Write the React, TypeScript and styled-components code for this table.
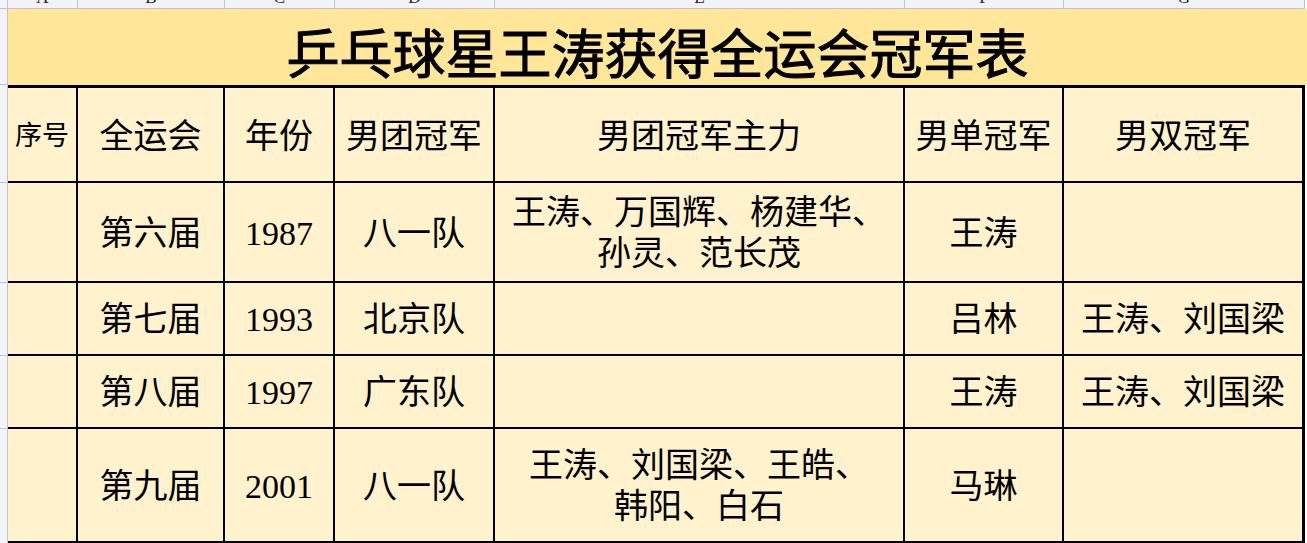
import styled, { createGlobalStyle } from 'styled-components';

type Cell = string | string[];

const GlobalStyle = createGlobalStyle`
	body {
		margin: 0;
		background: #ffffff;
	}
`;

const Sheet = styled.div`
	display: grid;
	grid-template-columns: 8px 70px 147px 110px 160px 410px 159px 241px 2px;
	grid-template-rows: 9px 76px 98px 100px 73px 73px 115px;
	width: 1307px;
	height: 543px;
	overflow: hidden;
	color: #000;
`;

const Gutter = styled.div`
	background: #f1f3f8;
	border-right: 1px solid #bcc4d4;
	border-bottom: 1px solid #bcc4d4;
	box-sizing: border-box;
`;

// column letters sit mostly above the visible area, only their feet show
const ColLetter = styled.div`
	display: flex;
	justify-content: center;
	align-items: flex-start;
	overflow: hidden;
	background: #f1f3f8;
	border-right: 1px solid #bcc4d4;
	border-bottom: 1px solid #bcc4d4;
	box-sizing: border-box;
	font-family: 'Liberation Serif', serif;
	font-size: 17px;
	line-height: 17px;
	color: #222;
	span {
		margin-top: -11px;
	}
`;

const Title = styled.div`
	grid-column: 2 / -1;
	display: flex;
	justify-content: center;
	align-items: center;
	padding-top: 8px;
	box-sizing: border-box;
	background: #ffe699;
	font-family: 'Noto Sans CJK SC', sans-serif;
	font-weight: 400;
	-webkit-text-stroke: 1px #000;
	font-size: 53px;
	line-height: 1;
`;

const Box = styled.div<{ $head?: boolean; $last?: boolean; $bottom?: boolean; $small?: boolean }>`
	display: flex;
	flex-direction: column;
	justify-content: center;
	align-items: center;
	box-sizing: border-box;
	background: #fff2cc;
	border-right: ${(p) => (p.$last ? '3px' : '2px')} solid #000;
	border-bottom: ${(p) => (p.$bottom ? '3px' : '2px')} solid #000;
	border-top: ${(p) => (p.$head ? '3px solid #000' : 'none')};
	padding-top: ${(p) => (p.$head ? '4px' : '2px')};
	font-family: 'Liberation Serif', 'Noto Sans CJK SC', serif;
	font-size: ${(p) => (p.$small ? '27px' : '34px')};
	line-height: 41px;
	white-space: nowrap;
`;

const Filler = styled.div`
	background: #ffffff;
`;

const letters = ['A', 'B', 'C', 'D', 'E', 'F', 'G'];

const headers = ['序号', '全运会', '年份', '男团冠军', '男团冠军主力', '男单冠军', '男双冠军'];

const rows: Cell[][] = [
	['', '第六届', '1987', '八一队', ['王涛、万国辉、杨建华、', '孙灵、范长茂'], '王涛', ''],
	['', '第七届', '1993', '北京队', '', '吕林', '王涛、刘国梁'],
	['', '第八届', '1997', '广东队', '', '王涛', '王涛、刘国梁'],
	['', '第九届', '2001', '八一队', ['王涛、刘国梁、王皓、', '韩阳、白石'], '马琳', ''],
];

function App() {
	return (
		<>
			<GlobalStyle />
			<Sheet>
				<Gutter />
				{letters.map((l) => (
					<ColLetter key={l}>
						<span>{l}</span>
					</ColLetter>
				))}
				<Filler />

				<Gutter />
				<Title>乒乓球星王涛获得全运会冠军表</Title>

				<Gutter />
				{headers.map((h, i) => (
					<Box key={h} $head $small={i === 0} $last={i === headers.length - 1}>
						{h}
					</Box>
				))}
				<Filler />

				{rows.map((row, r) => (
					<>
						<Gutter key={`g${r}`} />
						{row.map((cell, c) => (
							<Box
								key={`${r}-${c}`}
								$last={c === row.length - 1}
								$bottom={r === rows.length - 1}
							>
								{Array.isArray(cell) ? cell.map((line) => <span key={line}>{line}</span>) : cell}
							</Box>
						))}
						<Filler key={`f${r}`} />
					</>
				))}
			</Sheet>
		</>
	);
}

export default App;
